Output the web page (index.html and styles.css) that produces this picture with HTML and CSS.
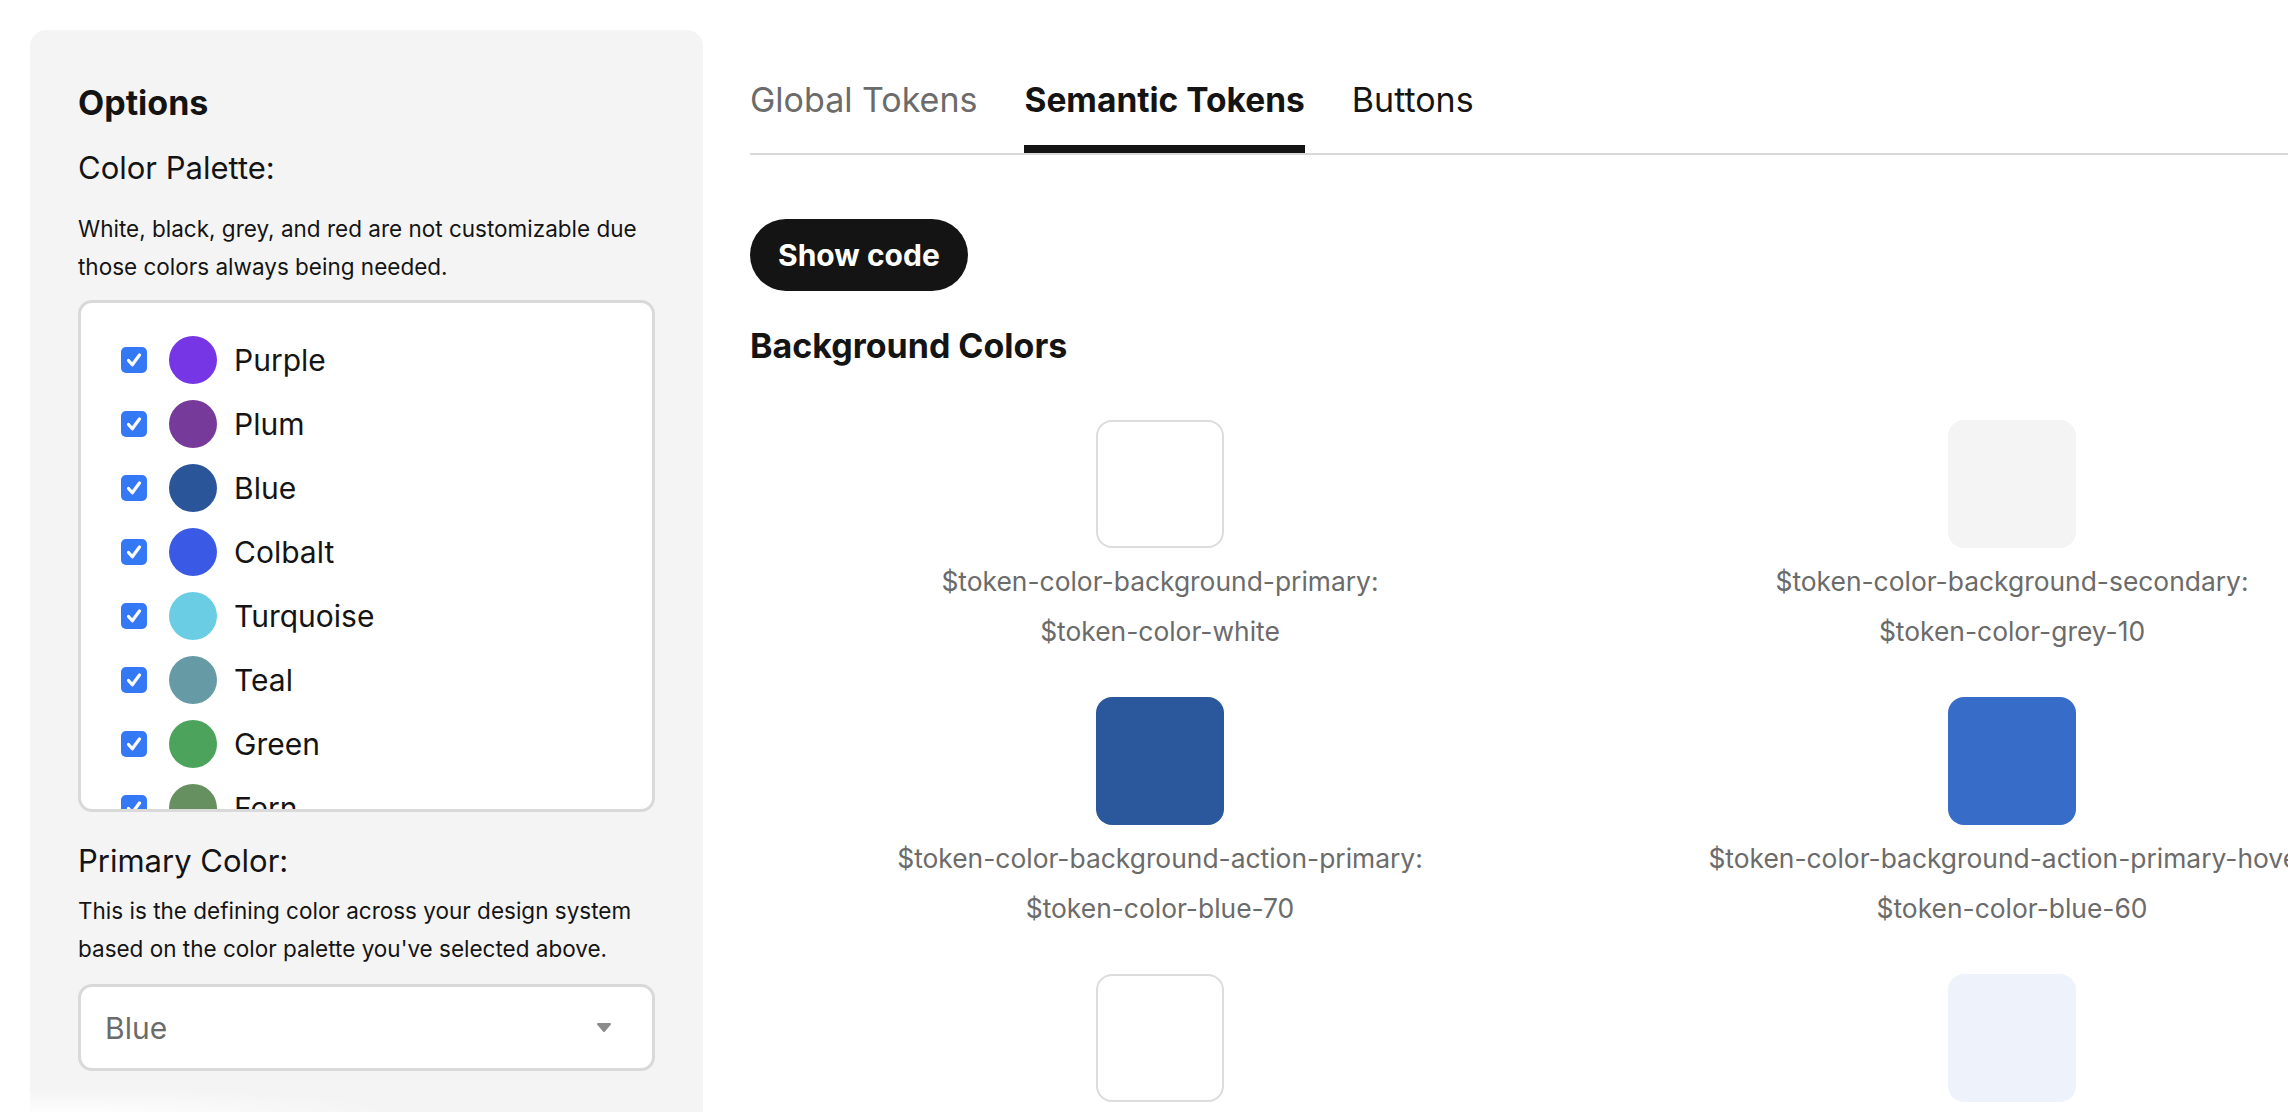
FILE: index.html
```html
<!DOCTYPE html>
<html lang="en">
<head>
<meta charset="utf-8">
<title>Design Tokens</title>
<link rel="stylesheet" href="styles.css">
</head>
<body>
<div class="app">
  <aside class="sidebar">
    <h2 class="sidebar-title">Options</h2>
    <h3 class="field-label">Color Palette:</h3>
    <p class="field-help help-palette">White, black, grey, and red are not customizable due those colors always being needed.</p>
    <div class="palette-list">
      <label class="palette-item"><span class="check"><svg viewBox="0 0 26 26" width="26" height="26"><path d="M7.5 13.5l3.8 4.2L18.5 8" fill="none" stroke="#fff" stroke-width="3.2" stroke-linecap="round" stroke-linejoin="round"/></svg></span><span class="dot dot-purple"></span><span class="name">Purple</span></label>
      <label class="palette-item"><span class="check"><svg viewBox="0 0 26 26" width="26" height="26"><path d="M7.5 13.5l3.8 4.2L18.5 8" fill="none" stroke="#fff" stroke-width="3.2" stroke-linecap="round" stroke-linejoin="round"/></svg></span><span class="dot dot-plum"></span><span class="name">Plum</span></label>
      <label class="palette-item"><span class="check"><svg viewBox="0 0 26 26" width="26" height="26"><path d="M7.5 13.5l3.8 4.2L18.5 8" fill="none" stroke="#fff" stroke-width="3.2" stroke-linecap="round" stroke-linejoin="round"/></svg></span><span class="dot dot-blue"></span><span class="name">Blue</span></label>
      <label class="palette-item"><span class="check"><svg viewBox="0 0 26 26" width="26" height="26"><path d="M7.5 13.5l3.8 4.2L18.5 8" fill="none" stroke="#fff" stroke-width="3.2" stroke-linecap="round" stroke-linejoin="round"/></svg></span><span class="dot dot-colbalt"></span><span class="name">Colbalt</span></label>
      <label class="palette-item"><span class="check"><svg viewBox="0 0 26 26" width="26" height="26"><path d="M7.5 13.5l3.8 4.2L18.5 8" fill="none" stroke="#fff" stroke-width="3.2" stroke-linecap="round" stroke-linejoin="round"/></svg></span><span class="dot dot-turquoise"></span><span class="name">Turquoise</span></label>
      <label class="palette-item"><span class="check"><svg viewBox="0 0 26 26" width="26" height="26"><path d="M7.5 13.5l3.8 4.2L18.5 8" fill="none" stroke="#fff" stroke-width="3.2" stroke-linecap="round" stroke-linejoin="round"/></svg></span><span class="dot dot-teal"></span><span class="name">Teal</span></label>
      <label class="palette-item"><span class="check"><svg viewBox="0 0 26 26" width="26" height="26"><path d="M7.5 13.5l3.8 4.2L18.5 8" fill="none" stroke="#fff" stroke-width="3.2" stroke-linecap="round" stroke-linejoin="round"/></svg></span><span class="dot dot-green"></span><span class="name">Green</span></label>
      <label class="palette-item"><span class="check"><svg viewBox="0 0 26 26" width="26" height="26"><path d="M7.5 13.5l3.8 4.2L18.5 8" fill="none" stroke="#fff" stroke-width="3.2" stroke-linecap="round" stroke-linejoin="round"/></svg></span><span class="dot dot-fern"></span><span class="name">Fern</span></label>
    </div>
    <h3 class="field-label label-primary">Primary Color:</h3>
    <p class="field-help help-primary">This is the defining color across your design system based on the color palette you've selected above.</p>
    <div class="select">
      <span class="select-value">Blue</span>
      <svg class="select-arrow" viewBox="0 0 16 11" width="16" height="11"><path d="M2 2h12l-6 7z" fill="#8c8c8c" stroke="#8c8c8c" stroke-width="2" stroke-linejoin="round"/></svg>
    </div>
  </aside>

  <main class="main">
    <nav class="tabs">
      <span class="tab tab-muted">Global Tokens</span>
      <span class="tab tab-active">Semantic Tokens</span>
      <span class="tab">Buttons</span>
    </nav>

    <button class="show-code">Show code</button>

    <h3 class="section-title">Background Colors</h3>

    <div class="token-grid">
      <div class="token">
        <div class="swatch swatch-white"></div>
        <p class="token-name">$token-color-background-primary:</p>
        <p class="token-value">$token-color-white</p>
      </div>
      <div class="token">
        <div class="swatch swatch-grey10"></div>
        <p class="token-name">$token-color-background-secondary:</p>
        <p class="token-value">$token-color-grey-10</p>
      </div>
      <div class="token">
        <div class="swatch swatch-grey20"></div>
        <p class="token-name">$token-color-background-tertiary:</p>
        <p class="token-value">$token-color-grey-20</p>
      </div>
      <div class="token">
        <div class="swatch swatch-blue70"></div>
        <p class="token-name">$token-color-background-action-primary:</p>
        <p class="token-value">$token-color-blue-70</p>
      </div>
      <div class="token">
        <div class="swatch swatch-blue60"></div>
        <p class="token-name">$token-color-background-action-primary-hover:</p>
        <p class="token-value">$token-color-blue-60</p>
      </div>
      <div class="token">
        <div class="swatch swatch-blue80"></div>
        <p class="token-name">$token-color-background-action-primary-active:</p>
        <p class="token-value">$token-color-blue-80</p>
      </div>
      <div class="token">
        <div class="swatch swatch-white"></div>
        <p class="token-name">$token-color-background-action-secondary:</p>
        <p class="token-value">$token-color-white</p>
      </div>
      <div class="token">
        <div class="swatch swatch-blue10"></div>
        <p class="token-name">$token-color-background-action-secondary-hover:</p>
        <p class="token-value">$token-color-blue-10</p>
      </div>
      <div class="token">
        <div class="swatch swatch-blue20"></div>
        <p class="token-name">$token-color-background-action-secondary-active:</p>
        <p class="token-value">$token-color-blue-20</p>
      </div>
    </div>
  </main>
</div>
<div class="bottom-fade"></div>
</body>
</html>
```

FILE: styles.css
```css
* {
  box-sizing: border-box;
}

html,
body {
  margin: 0;
  height: 100%;
}

body {
  font-family: Inter, "Noto Sans", sans-serif;
  color: #141414;
  background: #ffffff;
  overflow: hidden;
}

.app {
  display: flex;
  gap: 47px;
  height: 100vh;
  padding: 30px 0 0 30px;
  overflow: hidden;
}

/* ---------- Sidebar ---------- */

.sidebar {
  flex: 0 0 673px;
  background: #f4f4f4;
  border-radius: 16px 16px 0 0;
  padding: 54px 48px 0;
}

.sidebar-title {
  margin: 0;
  font-size: 34px;
  font-weight: 700;
  line-height: 38px;
}

.field-label {
  margin: 28px 0 0;
  font-size: 31px;
  font-weight: 400;
  line-height: 36px;
}

.field-help {
  margin: 24px 0 0;
  font-size: 22.5px;
  line-height: 38px;
}

.palette-list {
  margin-top: 14px;
  height: 512px;
  background: #ffffff;
  border: 3px solid #d9d9d9;
  border-radius: 14px;
  padding: 33px 40px 0;
  overflow: hidden;
  display: flex;
  flex-direction: column;
  gap: 16px;
}

.palette-item {
  flex: none;
  display: flex;
  align-items: center;
  height: 48px;
}

.check {
  flex: none;
  width: 26px;
  height: 26px;
  border-radius: 5px;
  background: #3478f6;
  display: flex;
}

.dot {
  flex: none;
  width: 48px;
  height: 48px;
  border-radius: 50%;
  margin-left: 22px;
}

.dot-purple { background: #7636e5; }
.dot-plum { background: #763a9a; }
.dot-blue { background: #2a5599; }
.dot-colbalt { background: #3a5ae6; }
.dot-turquoise { background: #6acde4; }
.dot-teal { background: #669ba6; }
.dot-green { background: #4ca35b; }
.dot-fern { background: #66905f; }

.name {
  margin-left: 17px;
  font-size: 30px;
  line-height: 36px;
}

.label-primary {
  margin-top: 31px;
}

.help-primary {
  margin-top: 13px;
}

.select {
  margin-top: 16px;
  height: 87px;
  background: #ffffff;
  border: 3px solid #d9d9d9;
  border-radius: 14px;
  padding: 0 40px 0 24px;
  display: flex;
  align-items: center;
  justify-content: space-between;
}

.select-value {
  font-size: 30px;
  color: #6b6b6b;
}

.select-arrow {
  display: block;
}

/* ---------- Main ---------- */

.main {
  flex: 1;
  min-width: 0;
  overflow: hidden;
}

.tabs {
  display: flex;
  gap: 47px;
  padding-top: 52px;
  border-bottom: 2px solid #d9d9d9;
}

.tab {
  position: relative;
  font-size: 34px;
  line-height: 36px;
  padding-bottom: 35px;
  color: #141414;
}

.tab-muted {
  color: #6b6b6b;
}

.tab-active {
  font-size: 33.5px;
  font-weight: 700;
}

.tab-active::after {
  content: "";
  position: absolute;
  left: 0;
  right: 0;
  bottom: 0;
  height: 8px;
  background: #141414;
}

.show-code {
  display: block;
  margin-top: 64px;
  height: 72px;
  padding: 0 28px;
  border: 0;
  border-radius: 36px;
  background: #141414;
  color: #ffffff;
  font-family: Inter, "Noto Sans", sans-serif;
  font-size: 30px;
  font-weight: 700;
  line-height: 1;
}

.section-title {
  margin: 36px 0 0;
  font-size: 34px;
  font-weight: 700;
  line-height: 38px;
}

.token-grid {
  margin-top: 55px;
  display: grid;
  grid-template-columns: repeat(3, 820px);
  column-gap: 32px;
  row-gap: 46px;
}

.token {
  display: flex;
  flex-direction: column;
  align-items: center;
}

.swatch {
  width: 128px;
  height: 128px;
  border-radius: 16px;
}

.swatch-white { background: #ffffff; border: 2px solid #dcdcdc; }
.swatch-grey10 { background: #f4f4f4; }
.swatch-grey20 { background: #e6e6e6; }
.swatch-blue70 { background: #2b579c; }
.swatch-blue60 { background: #376cc8; }
.swatch-blue80 { background: #1f4178; }
.swatch-blue10 { background: #edf2fb; }
.swatch-blue20 { background: #d6e2f6; }

.token-name,
.token-value {
  margin: 0;
  font-size: 26.4px;
  line-height: 39px;
  color: #6b6b6b;
  white-space: nowrap;
}

.token-name {
  margin-top: 14px;
}

.token-value {
  margin-top: 11px;
}

.bottom-fade {
  position: fixed;
  left: 0;
  bottom: 0;
  width: 480px;
  height: 24px;
  background: radial-gradient(ellipse 70% 100% at 15% 100%, rgba(255, 255, 255, 0.85), rgba(255, 255, 255, 0));
  pointer-events: none;
}
```
